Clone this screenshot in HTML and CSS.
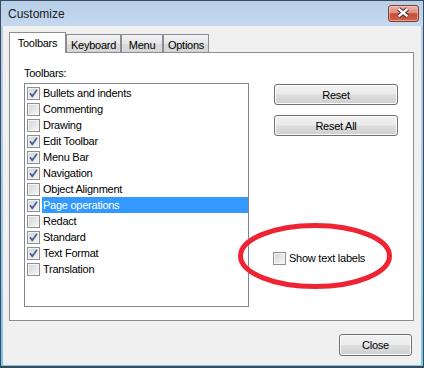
FILE: index.html
```html
<!DOCTYPE html>
<html lang="en">
<head>
    <meta charset="UTF-8">
    <title>Customize</title>
    <link rel="stylesheet" href="styles.css">
</head>
<body>
    <div class="window">
        <div class="titlebar">
            <span class="title">Customize</span>
            <button class="close-x" aria-label="Close">
                <svg viewBox="0 0 31 17" width="29" height="15">
                    <path d="M10 3.2 L20 11.8 M20 3.2 L10 11.8" stroke="#4a2a26" stroke-width="5" fill="none"/>
                    <path d="M10 3.2 L20 11.8 M20 3.2 L10 11.8" stroke="#fff" stroke-width="2.8" fill="none"/>
                </svg>
            </button>
        </div>

        <div class="client">
            <div class="tabs">
                <div class="tab active">Toolbars</div>
                <div class="tab tab-keyboard">Keyboard</div>
                <div class="tab tab-menu">Menu</div>
                <div class="tab tab-options">Options</div>
            </div>

            <div class="panel">
                <div class="left">
                    <div class="label">Toolbars:</div>
                    <ul class="listbox">
                        <li><span class="check"><svg viewBox="0 0 11 11"><path d="M2 5.2 L4.3 8.3 L9 1.8"/></svg></span><span class="item">Bullets and indents</span></li>
                        <li><span class="check"></span><span class="item">Commenting</span></li>
                        <li><span class="check"></span><span class="item">Drawing</span></li>
                        <li><span class="check"><svg viewBox="0 0 11 11"><path d="M2 5.2 L4.3 8.3 L9 1.8"/></svg></span><span class="item">Edit Toolbar</span></li>
                        <li><span class="check"><svg viewBox="0 0 11 11"><path d="M2 5.2 L4.3 8.3 L9 1.8"/></svg></span><span class="item">Menu Bar</span></li>
                        <li><span class="check"><svg viewBox="0 0 11 11"><path d="M2 5.2 L4.3 8.3 L9 1.8"/></svg></span><span class="item">Navigation</span></li>
                        <li><span class="check"></span><span class="item">Object Alignment</span></li>
                        <li><span class="check"><svg viewBox="0 0 11 11"><path d="M2 5.2 L4.3 8.3 L9 1.8"/></svg></span><span class="item selected">Page operations</span></li>
                        <li><span class="check"></span><span class="item">Redact</span></li>
                        <li><span class="check"><svg viewBox="0 0 11 11"><path d="M2 5.2 L4.3 8.3 L9 1.8"/></svg></span><span class="item">Standard</span></li>
                        <li><span class="check"><svg viewBox="0 0 11 11"><path d="M2 5.2 L4.3 8.3 L9 1.8"/></svg></span><span class="item">Text Format</span></li>
                        <li><span class="check"></span><span class="item">Translation</span></li>
                    </ul>
                </div>

                <div class="right">
                    <button class="btn wide">Reset</button>
                    <button class="btn wide">Reset All</button>
                    <label class="option"><span class="check"></span>Show text labels</label>
                </div>

                <svg class="ring" width="154" height="66" viewBox="0 0 154 66">
                    <ellipse cx="77" cy="33" rx="74.5" ry="30.5" fill="none" stroke="#ee2434" stroke-width="5"/>
                </svg>
            </div>

            <div class="footer">
                <button class="btn close">Close</button>
            </div>
        </div>
    </div>
</body>
</html>
```

FILE: styles.css
```css
body {
    margin: 0;
    font-family: "Liberation Sans", Arial, sans-serif;
    font-size: 11px;
    letter-spacing: -0.25px;
    color: #000;
    background-color: #f0f0f0;
}

.window {
    width: 424px;
    height: 368px;
    box-sizing: border-box;
    border: 1px solid #3d4a5a;
    border-bottom-width: 2px;
    padding: 0 2px 1px;
    background: linear-gradient(#b9d1ea, #a9cdee 40%, #7cc6ea);
    display: flex;
    flex-direction: column;
}

.titlebar {
    height: 25px;
    margin: 0 -2px;
    padding-left: 7px;
    display: flex;
    align-items: center;
    justify-content: space-between;
    background: linear-gradient(#b7cfe9, #c5d9ef);
}

.title {
    font-size: 12px;
    letter-spacing: 0;
    color: #1a1a1a;
}

.close-x {
    width: 31px;
    height: 17px;
    margin-right: 4px;
    padding: 0;
    border: 1px solid #8a3a30;
    border-radius: 3px;
    background: linear-gradient(#eab2a5, #da8d7d 45%, #c44c34 52%, #cf654d);
    box-shadow: inset 0 0 0 1px rgba(255, 220, 210, 0.5);
    display: flex;
    align-items: center;
    justify-content: center;
}

.close-x svg {
    display: block;
}

.client {
    flex: 1;
    background-color: #f0f0f0;
    padding: 6px 7px 0 6px;
    display: flex;
    flex-direction: column;
}

.tabs {
    height: 20px;
    display: flex;
    align-items: flex-end;
    position: relative;
    z-index: 1;
}

.tab {
    height: 18px;
    box-sizing: border-box;
    border: 1px solid #898c95;
    border-bottom: none;
    background: linear-gradient(#f3f3f3, #e6e6e6 50%, #dadada 52%, #d5d5d5);
    display: flex;
    align-items: center;
    justify-content: center;
    padding-top: 2px;
}

.tab.active {
    width: 57px;
    height: 21px;
    margin-bottom: -1px;
    background: #fff;
    padding-top: 0;
}

.tab-keyboard {
    width: 55px;
}

.tab-menu {
    width: 42px;
}

.tab-options {
    width: 46px;
}

.panel {
    height: 269px;
    box-sizing: border-box;
    border: 1px solid #898c95;
    background-color: #fff;
    padding: 14px 0 0 14px;
    display: flex;
    position: relative;
}

.left {
    width: 225px;
}

.label {
    height: 13px;
    line-height: 13px;
    margin-bottom: 3px;
}

.listbox {
    list-style: none;
    margin: 0;
    width: 225px;
    height: 224px;
    box-sizing: border-box;
    border: 1px solid #828790;
    padding: 1px 0 0 2px;
}

.listbox li {
    height: 16px;
    display: flex;
    align-items: stretch;
}

.check {
    width: 13px;
    height: 13px;
    flex: none;
    box-sizing: border-box;
    border: 1px solid #8e8f8f;
    background: linear-gradient(135deg, #cfd3d8, #f8f8f8);
    box-shadow: inset 0 0 0 1px #f4f4f4;
}

.listbox .check {
    margin: 2px 2px 0 0;
}

.check svg {
    display: block;
    width: 11px;
    height: 11px;
    fill: none;
    stroke: #4a5f97;
    stroke-width: 1.8;
}

.item {
    flex: 1;
    padding: 0 1px;
    line-height: 16px;
}

.item.selected {
    background-color: #3399ff;
    color: #fff;
}

.right {
    margin-left: 25px;
    padding-top: 17px;
    display: flex;
    flex-direction: column;
    align-items: flex-start;
}

.btn {
    font-family: inherit;
    font-size: 11px;
    letter-spacing: -0.25px;
    color: #000;
    padding: 0;
    border: 1px solid #707070;
    border-radius: 3px;
    background: linear-gradient(#f2f2f2, #ebebeb 48%, #dddddd 52%, #cfcfcf);
    box-shadow: inset 0 0 0 1px #fbfbfb;
}

.btn.wide {
    width: 124px;
    height: 21px;
}

.btn.wide + .btn.wide {
    margin-top: 10px;
}

.option {
    margin: 116px 0 0 -1px;
    height: 13px;
    line-height: 13px;
    display: flex;
    align-items: center;
    gap: 3px;
}

.ring {
    position: absolute;
    left: 228px;
    top: 170px;
}

.footer {
    display: flex;
    justify-content: flex-end;
    padding: 13px 2px 0 0;
}

.btn.close {
    width: 73px;
    height: 22px;
}
```
